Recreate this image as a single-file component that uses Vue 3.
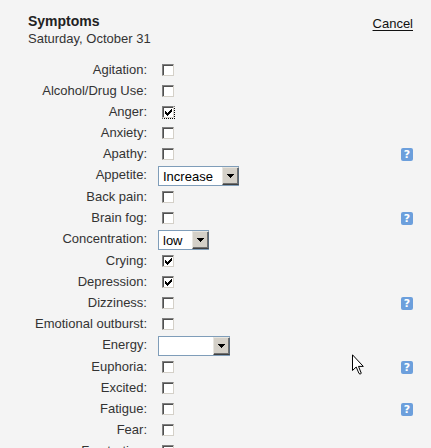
<script setup>
import { ref } from 'vue'

const symptoms = ref([
  { id: 'agitation', label: 'Agitation', value: false },
  { id: 'alcohol', label: 'Alcohol/Drug Use', value: false },
  { id: 'anger', label: 'Anger', value: true, focused: true },
  { id: 'anxiety', label: 'Anxiety', value: false },
  { id: 'apathy', label: 'Apathy', value: false, help: true },
  { id: 'appetite', label: 'Appetite', value: 'Increase', options: ['Increase'] },
  { id: 'back-pain', label: 'Back pain', value: false },
  { id: 'brain-fog', label: 'Brain fog', value: false, help: true },
  { id: 'concentration', label: 'Concentration', value: 'low', options: ['low'] },
  { id: 'crying', label: 'Crying', value: true },
  { id: 'depression', label: 'Depression', value: true },
  { id: 'dizziness', label: 'Dizziness', value: false, help: true },
  { id: 'emotional', label: 'Emotional outburst', value: false },
  { id: 'energy', label: 'Energy', value: '', options: [''] },
  { id: 'euphoria', label: 'Euphoria', value: false, help: true },
  { id: 'excited', label: 'Excited', value: false },
  { id: 'fatigue', label: 'Fatigue', value: false, help: true },
  { id: 'fear', label: 'Fear', value: false },
  { id: 'frustration', label: 'Frustration', value: false },
])
</script>

<template>
  <main class="page">
    <header class="head">
      <div>
        <h1 class="title">Symptoms</h1>
        <p class="date">Saturday, October 31</p>
      </div>
      <a class="cancel" href="#">Cancel</a>
    </header>

    <form class="list">
      <div v-for="s in symptoms" :key="s.id" class="row">
        <label class="label" :for="s.id">{{ s.label }}:</label>
        <span v-if="s.options" class="select-box">
          <select :id="s.id" v-model="s.value" class="select" :class="{ blank: !s.value }">
            <option v-for="o in s.options" :key="o" :value="o">{{ o }}</option>
          </select>
          <span class="arrow">
            <svg width="7" height="4" viewBox="0 0 7 4" shape-rendering="crispEdges" aria-hidden="true">
              <path d="M0 0h7v1H0zM1 1h5v1H1zM2 2h3v1H2zM3 3h1v1H3z" />
            </svg>
          </span>
        </span>
        <span v-else class="check-box" :class="{ focused: s.focused }">
          <input :id="s.id" v-model="s.value" class="check" type="checkbox" />
          <svg v-if="s.value" class="tick" width="7" height="7" viewBox="0 0 7 7" shape-rendering="crispEdges" aria-hidden="true">
            <path d="M0 2h1v3H0zM1 3h1v3H1zM2 4h1v3H2zM3 3h1v3H3zM4 2h1v3H4zM5 1h1v3H5zM6 0h1v3H6z" />
          </svg>
        </span>
        <button v-if="s.help" class="help" type="button" :aria-label="'About ' + s.label">?</button>
      </div>
    </form>

    <svg class="pointer" width="12" height="21" viewBox="0 0 12 21" aria-hidden="true">
      <path d="M.5 .8V16.5L4.2 13L7 19.5Q8 20.8 9.3 19.3L6.5 12.4H11.3Z" fill="#fff" stroke="#000" />
    </svg>
  </main>
</template>

<style>
body {
  background: #f4f4f4;
  overflow: hidden;
}
</style>

<style scoped>
.page {
  position: relative;
  box-sizing: border-box;
  min-height: 100vh;
  padding: 12px 18px 0 28px;
  background: #f4f4f4;
  color: #333;
  font: 13px/18px "Liberation Sans", Arial, sans-serif;
}
.head {
  display: flex;
  justify-content: space-between;
  align-items: flex-start;
}
.title {
  margin: 0;
  font-size: 14px;
  line-height: 18px;
  color: #222;
}
.date {
  margin: 0;
}
.cancel {
  margin-top: 3px;
  color: #111;
  text-decoration: underline;
  text-underline-offset: 2px;
}
.list {
  margin-top: 12px;
}
.row {
  display: grid;
  grid-template-columns: 119px 1fr auto;
  column-gap: 11px;
  align-items: start;
  min-height: 21px;
}
.label {
  text-align: right;
  line-height: 20px;
}
.select-box {
  position: relative;
  display: flex;
  justify-self: start;
  padding: 1px 0;
}
.select {
  appearance: none;
  box-sizing: border-box;
  height: 20px;
  margin: 0;
  padding: 1px 25px 0 4px;
  border: 1px solid #7f9db9;
  border-radius: 0;
  background: #fff;
  color: #000;
  font: 13px/17px "Liberation Sans", Arial, sans-serif;
}
.blank {
  width: 72px;
}
.arrow {
  position: absolute;
  top: 2px;
  right: 0;
  bottom: 2px;
  display: flex;
  align-items: center;
  justify-content: center;
  box-sizing: border-box;
  width: 17px;
  border: 1px solid;
  border-color: #e8e6e0 #5a6a7a #404040 #e8e6e0;
  box-shadow: inset -1px -1px #707070;
  background: #d4d0c8;
  pointer-events: none;
}
.check-box {
  position: relative;
  display: flex;
  justify-self: start;
  margin: 4px 0 0 4px;
}
.focused::after {
  content: "";
  position: absolute;
  inset: 0 -1px -1px 0;
  border: 1px dotted #000;
  border-top-color: transparent;
  border-left-color: transparent;
  pointer-events: none;
}
.check {
  appearance: none;
  box-sizing: border-box;
  width: 12px;
  height: 12px;
  margin: 0;
  border: 1px solid;
  border-color: #808080 #d4d0c8 #d4d0c8 #808080;
  box-shadow: inset 1px 1px #505050;
  background: #fff;
}
.tick {
  position: absolute;
  top: 3px;
  left: 3px;
  pointer-events: none;
}
.help {
  width: 12px;
  height: 13px;
  margin: 4px 0 0;
  padding: 0;
  border: 0;
  border-radius: 2px;
  background: #6c9fdc;
  color: #fff;
  font: bold 11px/13px "DejaVu Sans", Verdana, sans-serif;
  text-align: center;
}
.pointer {
  position: absolute;
  top: 354px;
  left: 352px;
}
</style>
